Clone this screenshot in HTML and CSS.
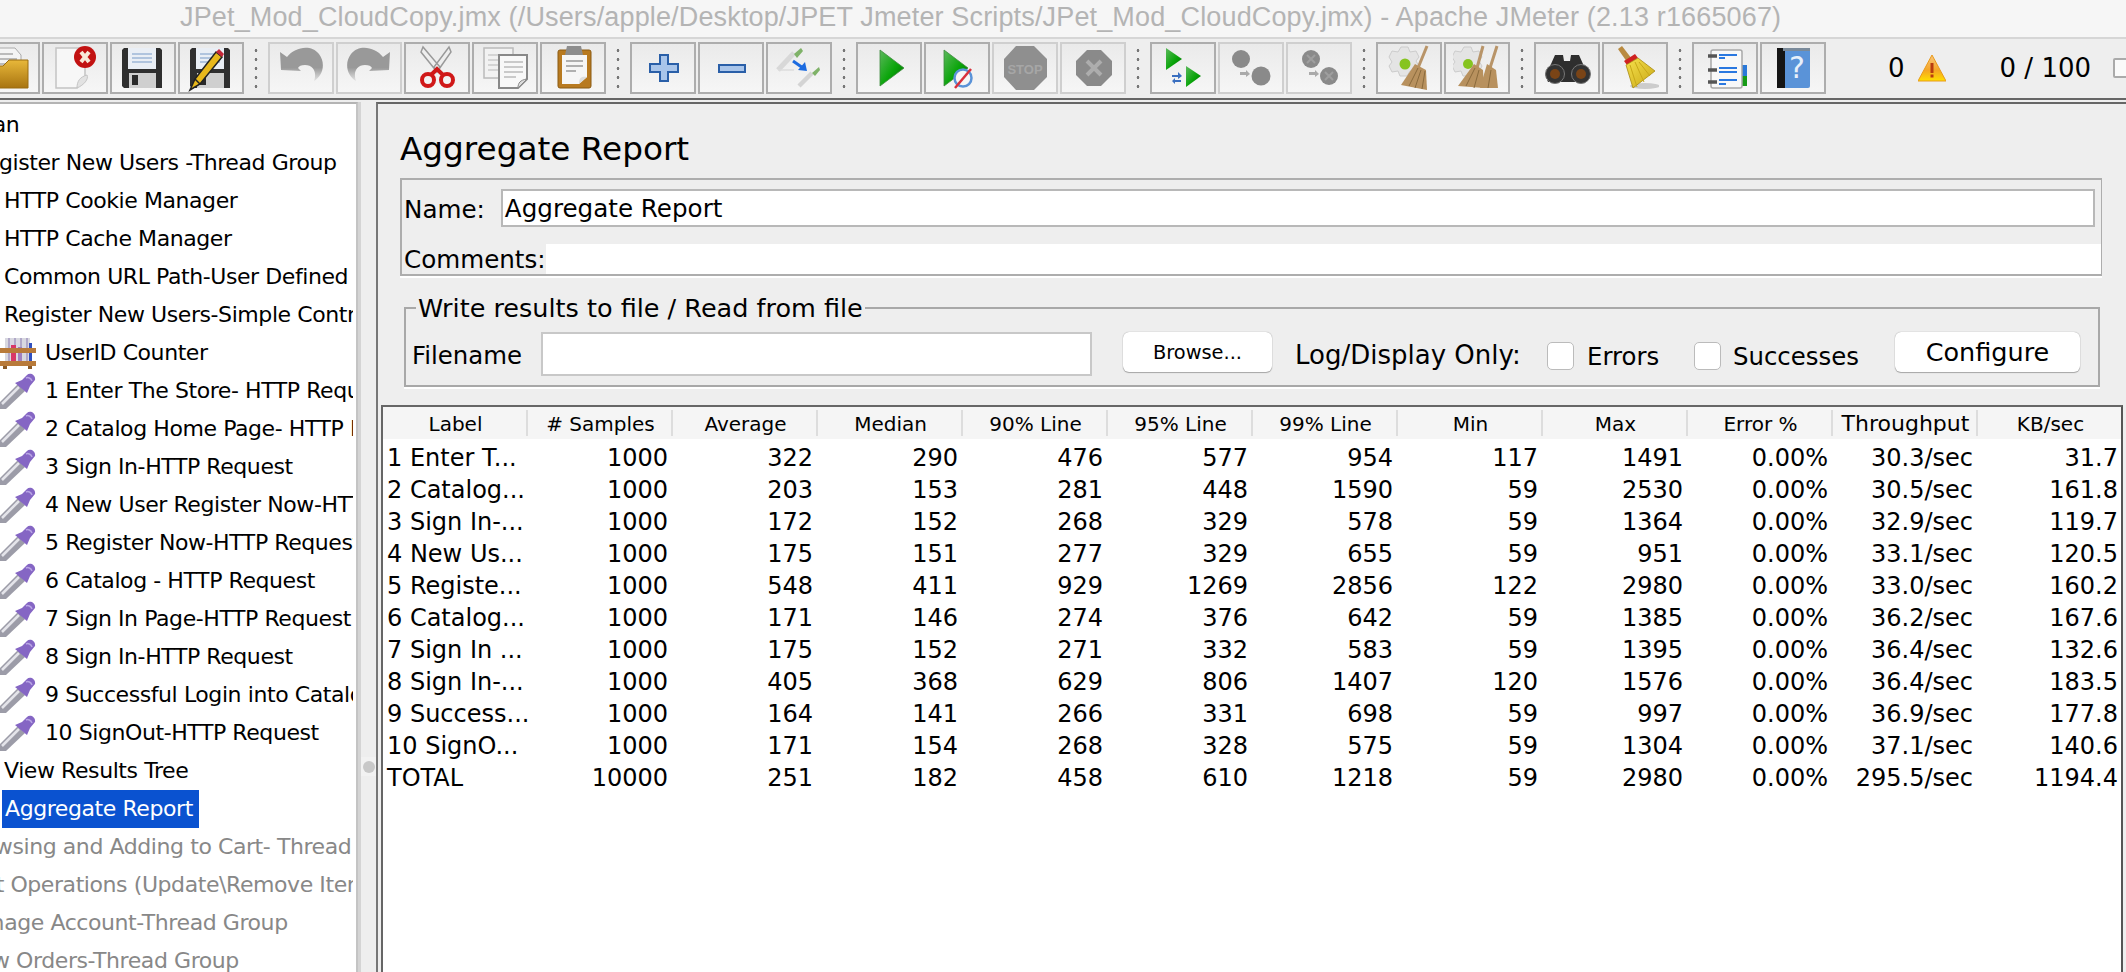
FILE: index.html
```html
<!DOCTYPE html>
<html lang="en">
<head>
<meta charset="utf-8">
<title>JMeter Aggregate Report</title>
<link rel="stylesheet" href="styles.css">
</head>
<body>
<svg class="defs" width="0" height="0" aria-hidden="true">
<defs>
<linearGradient id="gGreen" x1="0" y1="0" x2="1" y2="1"><stop offset="0" stop-color="#5cb85c"/><stop offset=".55" stop-color="#0aa50a"/><stop offset="1" stop-color="#006a00"/></linearGradient>
<linearGradient id="gGray" x1="0" y1="0" x2="0" y2="1"><stop offset="0" stop-color="#999"/><stop offset=".6" stop-color="#999"/><stop offset="1" stop-color="#e4e4e4"/></linearGradient>
<linearGradient id="gFolder" x1="0" y1="0" x2="0" y2="1"><stop offset="0" stop-color="#e8b83a"/><stop offset="1" stop-color="#a87410"/></linearGradient>
<linearGradient id="gBristle" x1="0" y1="0" x2="1" y2="1"><stop offset="0" stop-color="#f6e04c"/><stop offset="1" stop-color="#c9a816"/></linearGradient>
<linearGradient id="gWarn" x1="0" y1="0" x2="0" y2="1"><stop offset="0" stop-color="#f9c680"/><stop offset=".6" stop-color="#f5a623"/><stop offset="1" stop-color="#ffe000"/></linearGradient>

<symbol id="i-open" viewBox="0 0 48 48"><path d="M10 4h22l6 7v16H10z" fill="#f4f4f4" stroke="#aaa"/><path d="M14 10h16M14 15h20M14 20h20" stroke="#bbb" stroke-width="2"/><path d="M6 44V22h14l6-6h19v28z" fill="url(#gFolder)" stroke="#9a6c10"/></symbol>
<symbol id="i-new" viewBox="0 0 48 48"><path d="M5 4h29v28L26 44H5z" fill="#f7f7f7" stroke="#c4c4c4" stroke-width="1.5"/><path d="M26 44c0-7 3-11 10-13 2 4-3 10-10 13z" fill="#e2e2e2" stroke="#c4c4c4"/><circle cx="34" cy="13" r="11" fill="#c21212"/><path d="M30 8l8 10M38 8l-8 10" stroke="#f8e8d8" stroke-width="4"/></symbol>
<symbol id="i-save" viewBox="0 0 48 48"><path d="M3 6l2-2h36l2 2v38H5l-2-2z" fill="#2f2f2f"/><rect x="9" y="4" width="28" height="21" fill="#e9eef5"/><path d="M13 10h20M13 14h20M13 18h20" stroke="#9db7d6" stroke-width="1.6"/><rect x="10" y="29" width="27" height="15" fill="#cfcfcf"/><rect x="13" y="31" width="6" height="10" fill="#2a2a2a"/></symbol>
<symbol id="i-saveas" viewBox="0 0 48 48"><use href="#i-save" width="48" height="48"/><path d="M3 46l5-11L29 8l6 5L13 40z" fill="#e8b81c" stroke="#222" stroke-width="1.5"/><path d="M29 8l3-3 5 5-2 3z" fill="#c6283a"/><path d="M8 35l5 5" stroke="#222" stroke-width="1.5"/></symbol>
<symbol id="i-undo" viewBox="0 0 48 48"><path d="M3 8l7 5C18 3 34 0 42 10c7 9 4 22-5 27 3-8 0-16-9-16-4 0-6 1-7 3l3 3-20-1z" fill="url(#gGray)"/></symbol>
<symbol id="i-redo" viewBox="0 0 48 48"><path d="M45 8l-7 5C30 3 14 0 6 10c-7 9-4 22 5 27-3-8 0-16 9-16 4 0 6 1 7 3l-3 3 20-1z" fill="url(#gGray)"/></symbol>
<symbol id="i-cut" viewBox="0 0 48 48"><path d="M10 3l-2 5 16 20 3-5zM36 3l2 5-14 20-3-5z" fill="#eee" stroke="#999" stroke-width="1.5"/><circle cx="15" cy="36" r="6" fill="none" stroke="#d01818" stroke-width="4"/><circle cx="34" cy="36" r="6" fill="none" stroke="#d01818" stroke-width="4"/><path d="M18 31l6-6 6 6" stroke="#d01818" stroke-width="4" fill="none"/></symbol>
<symbol id="i-copy" viewBox="0 0 48 48"><rect x="3" y="4" width="29" height="30" fill="#f2f2f2" stroke="#bbb" stroke-width="1.5"/><path d="M7 11h20M7 16h20M7 21h20M7 26h14" stroke="#ccc" stroke-width="1.5"/><path d="M18 11h28v24l-9 9H18z" fill="#f8f8f8" stroke="#888" stroke-width="2"/><path d="M23 18h19M23 23h19M23 28h19M23 33h12" stroke="#bbb" stroke-width="1.5"/><path d="M37 44c0-5 2-8 9-9z" fill="#ddd" stroke="#888"/></symbol>
<symbol id="i-paste" viewBox="0 0 48 48"><rect x="9" y="6" width="33" height="38" rx="2" fill="#b87a20" stroke="#8a5a12"/><path d="M13 11h25v22l-8 7H13z" fill="#f6f6f6"/><path d="M30 40c0-6 2-8 8-7z" fill="#ddd"/><path d="M18 2h14l2 9H16z" fill="#8d8d8d"/><path d="M17 17h17M17 22h17M17 27h10" stroke="#999" stroke-width="1.6"/></symbol>
<symbol id="i-plus" viewBox="0 0 48 48"><path d="M21 11h8v9h10v8H29v9h-8v-9H11v-8h10z" fill="#a9c5ea" stroke="#2a5fa8" stroke-width="2"/></symbol>
<symbol id="i-minus" viewBox="0 0 48 48"><rect x="12" y="21" width="26" height="7" fill="#a9c5ea" stroke="#2a5fa8" stroke-width="2"/></symbol>
<symbol id="i-dup" viewBox="0 0 48 48"><path d="M3 26l16-17" stroke="#d8d8d8" stroke-width="5"/><path d="M19 10l7-6 2 3-6 7z" fill="#7fb268"/><path d="M3 26l16 0" stroke="#ddd" stroke-width="1.5"/><path d="M24 42l13-13" stroke="#d4d4d4" stroke-width="4.5"/><path d="M37 29l7-6 1 3-5 6z" fill="#7fb268"/><path d="M18 17l10 7" stroke="#1c6be0" stroke-width="3"/><path d="M32 27l-9-1 7-8z" fill="#1c6be0"/></symbol>
<symbol id="i-play" viewBox="0 0 48 48"><path d="M15 6l24 18-24 18z" fill="url(#gGreen)" stroke="#3c8a3c" stroke-width=".8"/></symbol>
<symbol id="i-playnt" viewBox="0 0 48 48"><path d="M11 6l24 18-24 18z" fill="url(#gGreen)" stroke="#3c8a3c" stroke-width=".8"/><circle cx="30" cy="34" r="8.5" fill="#f6f6f6" stroke="#5a93d8" stroke-width="2.5"/><path d="M22 44l16-19" stroke="#d8303c" stroke-width="2.5"/></symbol>
<symbol id="i-stop" viewBox="0 0 48 48"><path d="M15 2h18l13 13v18L33 46H15L3 33V15z" fill="#8f8f8f"/><text x="24" y="30" class="stop-word" text-anchor="middle">STOP</text></symbol>
<symbol id="i-halt" viewBox="0 0 48 48"><path d="M18 6h14l11 11v14L32 42H18L7 31V17z" fill="#8a8a8a"/><path d="M18 17l14 14M32 17L18 31" stroke="#adadad" stroke-width="4"/></symbol>
<symbol id="i-rstart" viewBox="0 0 48 48"><path d="M7 4l16 11L7 26z" fill="url(#gGreen)"/><path d="M27 22l15 10-15 11z" fill="url(#gGreen)"/><path d="M13 31h6v-3l4 4-4 3v-2h-6zM22 36h-6v-2l-3 3 3 3v-2h6z" fill="#3a6fc0"/></symbol>
<symbol id="i-rstop" viewBox="0 0 48 48"><circle cx="14" cy="15" r="9" fill="#8a8a8a"/><circle cx="34" cy="32" r="9.500" fill="#8a8a8a"/><path d="M13 28h6v-2l4 4-4 3v-2h-6z" fill="#aaa"/></symbol>
<symbol id="i-rhalt" viewBox="0 0 48 48"><circle cx="16" cy="15" r="9" fill="#8a8a8a"/><circle cx="34" cy="32" r="9" fill="#8a8a8a"/><path d="M12 11l8 8M20 11l-8 8M30 28l8 8M38 28l-8 8" stroke="#9f9f9f" stroke-width="2"/><path d="M14 28h6v-2l4 4-4 3v-2h-6z" fill="#aaa"/></symbol>
<symbol id="i-clear" viewBox="0 0 48 48"><path d="M16 3h7l2 5 6-1 3 6-3 4 3 5-3 6-6-1-3 5h-7l-2-5-6 1-3-6 3-4-3-5 3-6 6 1z" fill="#e4e4e4" stroke="#ccc"/><circle cx="20" cy="20" r="5.500" fill="#86c420"/><path d="M42 2l-9 22" stroke="#b89468" stroke-width="3"/><path d="M30 20l11 6 1 20-26-5z" fill="#b8915e"/><path d="M24 42l9-18M30 44l6-18M37 45l3-18" stroke="#8a6a3c"/></symbol>
<symbol id="i-clearall" viewBox="0 0 48 48"><path d="M11 3h7l2 5 6-1 3 6-3 4 3 5-3 6-6-1-3 5h-7l-2-5-6 1-3-6 3-4-3-5 3-6 6 1z" fill="#e4e4e4" stroke="#ccc"/><circle cx="15" cy="20" r="5" fill="#86c420"/><path d="M30 2l-6 22M44 2l-7 22" stroke="#b89468" stroke-width="3"/><path d="M21 20l9 6 1 18-26-2z" fill="#b8915e"/><path d="M34 20l9 6 2 18-18 0z" fill="#b8915e"/><path d="M13 42l9-18M21 44l5-18M35 44l3-18" stroke="#8a6a3c"/></symbol>
<symbol id="i-find" viewBox="0 0 48 48"><path d="M8 20l4-9h8l1 6h6l1-6h8l4 9 3 10-8 8H5l-3-8z" fill="#2e2e2e"/><circle cx="12" cy="30" r="9.500" fill="#333" stroke="#777"/><circle cx="38" cy="30" r="9.500" fill="#333" stroke="#777"/><circle cx="12" cy="30" r="5" fill="#7a4416"/><circle cx="38" cy="30" r="5" fill="#7a4416"/></symbol>
<symbol id="i-broom" viewBox="0 0 48 48"><ellipse cx="34" cy="42" rx="15" ry="3" fill="#ccc"/><path d="M7 5l4-3 10 13-5 3z" fill="#b98a40"/><path d="M13 17l11-7 3 4-11 7z" fill="#cf2222"/><path d="M15 21l12-7 17 13-22 17z" fill="url(#gBristle)" stroke="#a88a10" stroke-width=".8"/><path d="M19 21l7 22M24 18l9 20M28 18l11 14" stroke="#c8a818"/></symbol>
<symbol id="i-list" viewBox="0 0 48 48"><rect x="41" y="21" width="5" height="11" fill="#2a78d8"/><rect x="41" y="32" width="5" height="10" fill="#169a16"/><rect x="10" y="6" width="31" height="38" rx="2" fill="#f8f8f8" stroke="#a8a8a8" stroke-width="1.5"/><path d="M7 12h9M7 26h9M7 38h9" stroke="#555" stroke-width="3.5"/><path d="M18 11h18M18 14h6M18 24h18M18 28h18M18 36h18M18 40h7" stroke="#2a78e0" stroke-width="1.800"/></symbol>
<symbol id="i-help" viewBox="0 0 48 48"><rect x="8" y="4" width="33" height="40" rx="2" fill="#5a93d8"/><rect x="8" y="4" width="8" height="40" fill="#151515"/><rect x="14" y="4" width="27" height="3" fill="#7a8a9a"/><text x="28" y="34" class="help-word" text-anchor="middle">?</text></symbol>
<symbol id="i-warn" viewBox="0 0 28 28"><path d="M14 1L28 27H0z" fill="url(#gWarn)" stroke="#e89a1a" stroke-width="1"/><rect x="12.500" y="9" width="3" height="10" fill="#b83c10"/><rect x="12.500" y="20.500" width="3" height="3" fill="#b83c10"/></symbol>
<symbol id="i-rack" viewBox="0 0 36 32"><path d="M5 1h25v26H5z" fill="#d8d8e0"/><path d="M9 1v24M15 1v24M21 1v24M27 1v24" stroke="#b0a8c8" stroke-width="2"/><rect x="11" y="8" width="5" height="20" fill="#d83868"/><rect x="18" y="10" width="4" height="16" fill="#a080c0"/><rect x="29" y="6" width="3" height="20" fill="#3050c0"/><rect x="0" y="11" width="36" height="5" fill="#b87a3a"/><rect x="0" y="24" width="36" height="5" fill="#b87a3a"/><rect x="3" y="29" width="4" height="3" fill="#8a5a28"/><rect x="28" y="29" width="4" height="3" fill="#8a5a28"/></symbol>
<symbol id="i-drop" viewBox="0 0 36 36"><path d="M0 29L18 11l7 7L6 36H0z" fill="#9c9ca8"/><path d="M2 31L19 14" stroke="#e4e4ea" stroke-width="2.500"/><path d="M15 10l7-3 5-5c3-3 9 0 8 5l-5 6-3 7z" fill="#8566c4"/><path d="M26 5c2-1 5 0 6 3" stroke="#b8a4e4" stroke-width="1.500" fill="none"/></symbol>
</defs>
</svg>

<header class="titlebar">JPet_Mod_CloudCopy.jmx (/Users/apple/Desktop/JPET Jmeter Scripts/JPet_Mod_CloudCopy.jmx) - Apache JMeter (2.13 r1665067)</header>

<div class="toolbar">
  <div class="group">
    <div class="tool"><svg class="ico"><use href="#i-open"/></svg></div>
    <div class="tool"><svg class="ico"><use href="#i-new"/></svg></div>
    <div class="tool"><svg class="ico"><use href="#i-save"/></svg></div>
    <div class="tool"><svg class="ico"><use href="#i-saveas"/></svg></div>
  </div>
  <div class="sep"></div>
  <div class="group">
    <div class="tool off"><svg class="ico"><use href="#i-undo"/></svg></div>
    <div class="tool off"><svg class="ico"><use href="#i-redo"/></svg></div>
    <div class="tool"><svg class="ico"><use href="#i-cut"/></svg></div>
    <div class="tool"><svg class="ico"><use href="#i-copy"/></svg></div>
    <div class="tool"><svg class="ico"><use href="#i-paste"/></svg></div>
  </div>
  <div class="sep"></div>
  <div class="group">
    <div class="tool"><svg class="ico"><use href="#i-plus"/></svg></div>
    <div class="tool"><svg class="ico"><use href="#i-minus"/></svg></div>
    <div class="tool"><svg class="ico"><use href="#i-dup"/></svg></div>
  </div>
  <div class="sep"></div>
  <div class="group">
    <div class="tool"><svg class="ico"><use href="#i-play"/></svg></div>
    <div class="tool"><svg class="ico"><use href="#i-playnt"/></svg></div>
    <div class="tool off"><svg class="ico"><use href="#i-stop"/></svg></div>
    <div class="tool off"><svg class="ico"><use href="#i-halt"/></svg></div>
  </div>
  <div class="sep"></div>
  <div class="group">
    <div class="tool"><svg class="ico"><use href="#i-rstart"/></svg></div>
    <div class="tool off"><svg class="ico"><use href="#i-rstop"/></svg></div>
    <div class="tool off"><svg class="ico"><use href="#i-rhalt"/></svg></div>
  </div>
  <div class="sep"></div>
  <div class="group">
    <div class="tool"><svg class="ico"><use href="#i-clear"/></svg></div>
    <div class="tool"><svg class="ico"><use href="#i-clearall"/></svg></div>
  </div>
  <div class="sep"></div>
  <div class="group">
    <div class="tool"><svg class="ico"><use href="#i-find"/></svg></div>
    <div class="tool"><svg class="ico"><use href="#i-broom"/></svg></div>
  </div>
  <div class="sep"></div>
  <div class="group">
    <div class="tool"><svg class="ico"><use href="#i-list"/></svg></div>
    <div class="tool"><svg class="ico"><use href="#i-help"/></svg></div>
  </div>
  <div class="status">
    <span class="err-count">0</span>
    <svg class="warn"><use href="#i-warn"/></svg>
    <span class="threads">0 / 100</span>
    <span class="log-box"></span>
  </div>
</div>
<div class="rule"></div>

<main class="split">
  <nav class="tree">
    <div class="row plan">Test Plan</div>
    <div class="row grp">Register New Users -Thread Group</div>
    <div class="row leaf">HTTP Cookie Manager</div>
    <div class="row leaf">HTTP Cache Manager</div>
    <div class="row leaf">Common URL Path-User Defined Variables</div>
    <div class="row leaf">Register New Users-Simple Controller</div>
    <div class="row"><svg class="rack"><use href="#i-rack"/></svg><span>UserID Counter</span></div>
    <div class="row"><svg class="drop"><use href="#i-drop"/></svg><span>1 Enter The Store- HTTP Request</span></div>
    <div class="row"><svg class="drop"><use href="#i-drop"/></svg><span>2 Catalog Home Page- HTTP Request</span></div>
    <div class="row"><svg class="drop"><use href="#i-drop"/></svg><span>3 Sign In-HTTP Request</span></div>
    <div class="row"><svg class="drop"><use href="#i-drop"/></svg><span>4 New User Register Now-HTTP Request</span></div>
    <div class="row"><svg class="drop"><use href="#i-drop"/></svg><span>5 Register Now-HTTP Request</span></div>
    <div class="row"><svg class="drop"><use href="#i-drop"/></svg><span>6 Catalog - HTTP Request</span></div>
    <div class="row"><svg class="drop"><use href="#i-drop"/></svg><span>7 Sign In Page-HTTP Request</span></div>
    <div class="row"><svg class="drop"><use href="#i-drop"/></svg><span>8 Sign In-HTTP Request</span></div>
    <div class="row"><svg class="drop"><use href="#i-drop"/></svg><span>9 Successful Login into Catalog</span></div>
    <div class="row"><svg class="drop"><use href="#i-drop"/></svg><span>10 SignOut-HTTP Request</span></div>
    <div class="row leaf">View Results Tree</div>
    <div class="row"><span class="selected">Aggregate Report</span></div>
    <div class="row off g1">Browsing and Adding to Cart- Thread Group</div>
    <div class="row off g2">Cart Operations (Update\Remove Items)</div>
    <div class="row off g3">Manage Account-Thread Group</div>
    <div class="row off g4">View Orders-Thread Group</div>
  </nav>
  <div class="divider"><span class="grip"><span class="knob"></span></span></div>
  <section class="panel">
    <h1 class="heading">Aggregate Report</h1>
    <div class="names">
      <div class="name-row"><span class="lab">Name:</span><div class="field">Aggregate Report</div></div>
      <div class="comment-row"><span class="lab">Comments:</span><div class="comment"></div></div>
    </div>
    <fieldset class="fileset">
      <legend>Write results to file / Read from file</legend>
      <div class="file-row">
        <span class="fname">Filename</span>
        <div class="finput"></div>
        <div class="btn browse">Browse...</div>
        <span class="log">Log/Display Only:</span>
        <span class="check"></span><span class="chk-lab lab-e">Errors</span>
        <span class="check"></span><span class="chk-lab lab-s">Successes</span>
        <div class="btn config">Configure</div>
      </div>
    </fieldset>
    <div class="report">
      <table class="grid">
        <thead>
          <tr><th>Label</th><th># Samples</th><th>Average</th><th>Median</th><th>90% Line</th><th>95% Line</th><th>99% Line</th><th>Min</th><th>Max</th><th>Error %</th><th class="wide">Throughput</th><th>KB/sec</th></tr>
        </thead>
        <tbody>
          <tr><td>1 Enter T...</td><td>1000</td><td>322</td><td>290</td><td>476</td><td>577</td><td>954</td><td>117</td><td>1491</td><td>0.00%</td><td>30.3/sec</td><td>31.7</td></tr>
          <tr><td>2 Catalog...</td><td>1000</td><td>203</td><td>153</td><td>281</td><td>448</td><td>1590</td><td>59</td><td>2530</td><td>0.00%</td><td>30.5/sec</td><td>161.8</td></tr>
          <tr><td>3 Sign In-...</td><td>1000</td><td>172</td><td>152</td><td>268</td><td>329</td><td>578</td><td>59</td><td>1364</td><td>0.00%</td><td>32.9/sec</td><td>119.7</td></tr>
          <tr><td>4 New Us...</td><td>1000</td><td>175</td><td>151</td><td>277</td><td>329</td><td>655</td><td>59</td><td>951</td><td>0.00%</td><td>33.1/sec</td><td>120.5</td></tr>
          <tr><td>5 Registe...</td><td>1000</td><td>548</td><td>411</td><td>929</td><td>1269</td><td>2856</td><td>122</td><td>2980</td><td>0.00%</td><td>33.0/sec</td><td>160.2</td></tr>
          <tr><td>6 Catalog...</td><td>1000</td><td>171</td><td>146</td><td>274</td><td>376</td><td>642</td><td>59</td><td>1385</td><td>0.00%</td><td>36.2/sec</td><td>167.6</td></tr>
          <tr><td>7 Sign In ...</td><td>1000</td><td>175</td><td>152</td><td>271</td><td>332</td><td>583</td><td>59</td><td>1395</td><td>0.00%</td><td>36.4/sec</td><td>132.6</td></tr>
          <tr><td>8 Sign In-...</td><td>1000</td><td>405</td><td>368</td><td>629</td><td>806</td><td>1407</td><td>120</td><td>1576</td><td>0.00%</td><td>36.4/sec</td><td>183.5</td></tr>
          <tr><td>9 Success...</td><td>1000</td><td>164</td><td>141</td><td>266</td><td>331</td><td>698</td><td>59</td><td>997</td><td>0.00%</td><td>36.9/sec</td><td>177.8</td></tr>
          <tr><td>10 SignO...</td><td>1000</td><td>171</td><td>154</td><td>268</td><td>328</td><td>575</td><td>59</td><td>1304</td><td>0.00%</td><td>37.1/sec</td><td>140.6</td></tr>
          <tr><td>TOTAL</td><td>10000</td><td>251</td><td>182</td><td>458</td><td>610</td><td>1218</td><td>59</td><td>2980</td><td>0.00%</td><td>295.5/sec</td><td>1194.4</td></tr>
        </tbody>
      </table>
    </div>
  </section>
</main>
</body>
</html>
```
FILE: styles.css
```css
* { box-sizing: border-box; }
html, body { margin: 0; height: 100%; }
body {
  width: 2126px; height: 972px; overflow: hidden; background: #eee; color: #000;
  font-family: "DejaVu Sans", sans-serif; font-size: 22px;
  display: flex; flex-direction: column;
}
.defs { position: absolute; }
.stop-word { font: bold 13px "Liberation Sans", sans-serif; fill: #a6a6a6; }
.help-word { font: 30px "DejaVu Sans", sans-serif; fill: #e8f0fa; }

.titlebar {
  flex: none; height: 39px; padding: 0 0 0 180px; background: #f6f6f6;
  border-bottom: 2px solid #d6d6d6; color: #b4b4b4;
  font: 27px/34px "Liberation Sans", sans-serif; letter-spacing: .15px; white-space: nowrap;
}
.toolbar {
  flex: none; height: 59px; padding: 3px 0 0; display: flex; align-items: flex-start;
  margin-left: -26px; overflow: visible;
}
.group { display: flex; gap: 2px; flex: none; }
.tool {
  flex: none; width: 66px; height: 52px; border: 2px solid #adadad;
  background: linear-gradient(#eaeaea, #f6f6f6); display: flex; justify-content: center;
}
.tool.off { border-color: #cfcfcf; }
.ico { width: 48px; height: 48px; }
.sep {
  flex: none; width: 24px; height: 44px; margin-top: 4px;
  background: radial-gradient(circle, #777 1.2px, transparent 1.6px) center top / 6px 9px repeat-y;
}
.status { display: flex; align-items: center; height: 52px; flex: none; }
.err-count { margin-left: 62px; font-size: 26px; }
.warn { width: 28px; height: 28px; margin-left: 13px; flex: none; }
.threads { margin-left: 54px; font-size: 26px; white-space: nowrap; }
.log-box { width: 20px; height: 20px; margin-left: 22px; border: 2px solid #aaa; border-radius: 2px; flex: none; background: #fafafa; }
.rule { flex: none; height: 4px; border-top: 2px solid #666; }

.split { flex: 1; display: flex; min-height: 0; }
.tree {
  flex: none; width: 358px; background: #fff; border-top: 2px solid #b4b4b4; border-right: 2px solid #c4c4c4;
  overflow: hidden; padding-top: 2px; letter-spacing: -.42px;
}
.row { height: 38px; line-height: 38px; white-space: nowrap; display: flex; align-items: center; width: 353px; overflow: hidden; }
.row.leaf { padding-left: 4px; }
.row.plan { text-indent: -74px; }
.row.grp { text-indent: -28px; }
.row.off { color: #888; }
.row.g1, .row.g2, .row.g3, .row.g4 { text-indent: -41px; }
.rack { width: 36px; height: 32px; margin-right: 9px; flex: none; }
.drop { width: 36px; height: 36px; margin-right: 9px; flex: none; }
.selected { margin-left: 2px; padding: 0 6px 0 3px; background: #0a52d0; color: #fff; }

.divider { flex: none; width: 18px; display: flex; flex-direction: column; justify-content: flex-start; border-left: 3px solid #d4d4d4; }
.grip { margin-top: 655px; height: 19px; background: #f2f2f2; display: flex; align-items: center; justify-content: center; }
.knob { width: 12px; height: 12px; border-radius: 50%; background: #c8c8c8; }

.panel { flex: 1; min-width: 0; display: flex; flex-direction: column; border-top: 2px solid #666; border-left: 2px solid #777; }
.heading { margin: 25px 0 0 22px; font-weight: 400; font-size: 32.7px; line-height: 40px; height: 49px; }
.names {
  margin: 0 24px 0 22px; height: 98px; border: 2px solid #adadad; border-right-width: 1px; border-bottom-width: 2px;
  box-shadow: 0 2px 0 #fff; display: flex; flex-direction: column; font-size: 24.6px;
}
.name-row { display: flex; align-items: center; padding: 9px 6px 0 2px; height: 47px; }
.lab { flex: none; position: relative; top: 1px; }
.field { flex: 1; height: 38px; margin-left: 16px; border: 2px solid #b8b8b8; background: #fff; padding-left: 2px; line-height: 35px; }
.comment-row { display: flex; align-items: stretch; margin-top: 17px; padding-left: 2px; flex: 1; line-height: 29px; }
.comment { flex: 1; background: #fff; }
.fileset {
  margin: 19px 26px 0 26px; padding: 0 14px 0 6px; height: 92px; border: 2px solid #a8a8a8; min-width: 0;
  box-shadow: 0 2px 0 #fff;
}
.fileset legend { padding: 0 2px; margin-left: 4px; font-size: 25.5px; line-height: 26px; }
.file-row { display: flex; align-items: center; font-size: 24.4px; height: 44px; margin-top: 11px; white-space: nowrap; }
.fname { width: 129px; flex: none; padding-top: 3px; }
.finput { width: 551px; height: 44px; flex: none; background: #fff; border: 2px solid #c8c8c8; }
.btn { background: #fff; border-radius: 6px; height: 40px; align-self: flex-start; box-shadow: 0 0 1px #888, 0 1px 1px #aaa; display: flex; align-items: center; justify-content: center; flex: none; }
.browse { width: 149px; margin-left: 31px; font-size: 19.4px; }
.log { margin-left: 23px; width: 252px; flex: none; font-size: 26px; padding-top: 2px; }
.check { width: 27px; height: 28px; flex: none; background: #fff; border: 1px solid #bbb; border-radius: 5px; margin-top: 3px; }
.chk-lab { margin-top: 5px; flex: none; }
.lab-e { margin-left: 13px; width: 107px; }
.lab-s { margin-left: 12px; width: 162px; }
.config { width: 185px; font-size: 25.5px; }

.report {
  flex: 1; margin: 18px 3px 0 3px; background: #fff; border-top: 2px solid #666; border-left: 2px solid #666; border-right: 2px solid #555; overflow: hidden;
}
.grid { width: 1740px; border-collapse: collapse; table-layout: fixed; font-size: 24px; }
.grid th {
  height: 35px; padding: 0 0 2px; font-weight: 400; font-size: 20px; text-align: center;
  background: linear-gradient(#ddd, #ddd) right 3px / 2px 26px no-repeat, linear-gradient(#f5f5f5, #f5f5f5) left top / 100% 32px no-repeat;
}
.grid th.wide { font-size: 22px; }
.grid td { height: 32px; padding: 0 5px 0 0; text-align: right; white-space: nowrap; overflow: hidden; }
.grid td:first-child { text-align: left; padding-left: 4px; }
```
